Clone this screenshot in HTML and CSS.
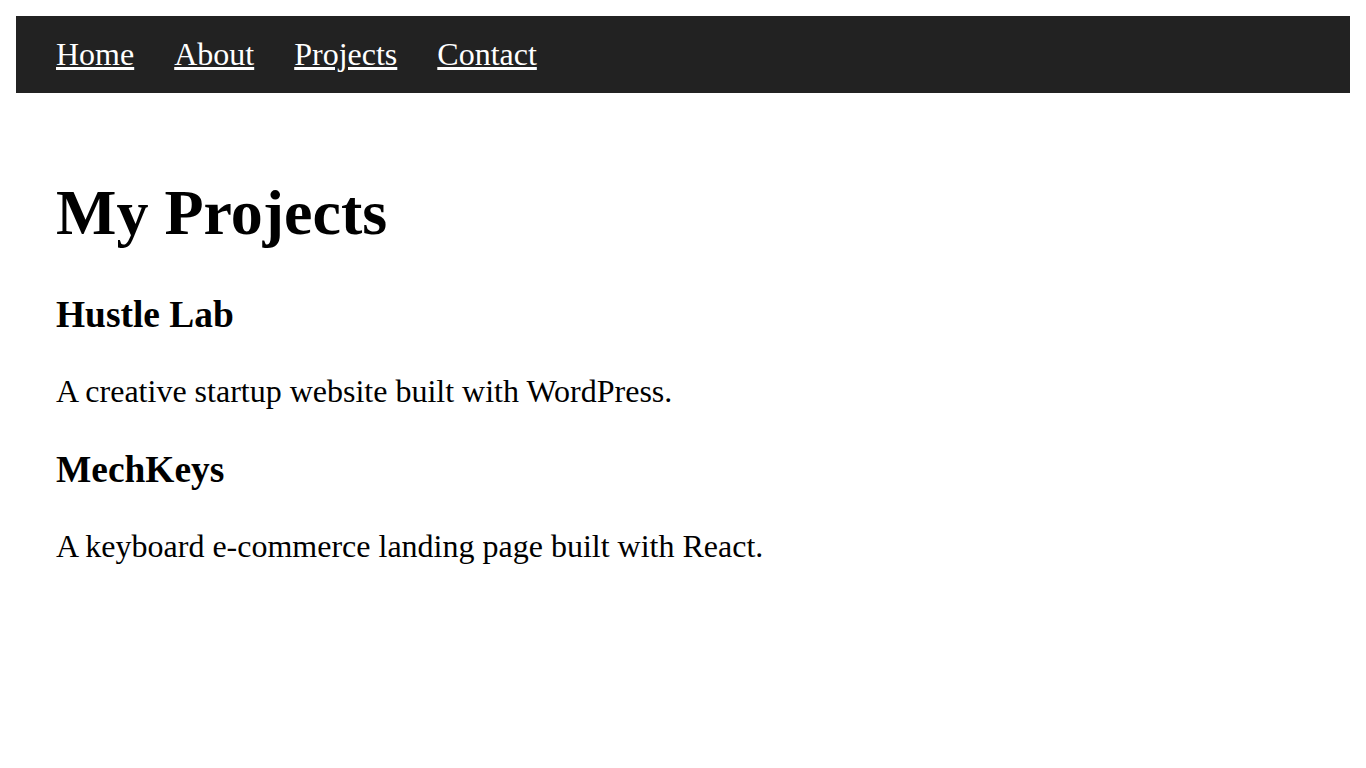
FILE: index.html
```html
<!DOCTYPE html>
<html lang="en">
<head>
<meta charset="utf-8">
<title>My Projects</title>
<link rel="stylesheet" href="styles.css">
</head>
<body>
<nav class="topnav">
  <a class="topnav-link" href="#">Home</a>
  <a class="topnav-link" href="#">About</a>
  <a class="topnav-link" href="#">Projects</a>
  <a class="topnav-link" href="#">Contact</a>
</nav>
<main class="content">
  <h1 class="page-title">My Projects</h1>
  <section class="project">
    <h3 class="project-title">Hustle Lab</h3>
    <p class="project-desc">A creative startup website built with WordPress.</p>
  </section>
  <section class="project">
    <h3 class="project-title">MechKeys</h3>
    <p class="project-desc">A keyboard e-commerce landing page built with React.</p>
  </section>
</main>
</body>
</html>
```
FILE: styles.css
```css
html, body {
  background: #ffffff;
}
body {
  margin: 16px;
  font-family: "Liberation Serif", "Times New Roman", serif;
  font-size: 32px;
  color: #000000;
}
.topnav {
  display: flex;
  gap: 40px;
  background: #222222;
  padding: 20px 40px;
}
.topnav-link {
  color: #ffffff;
  text-decoration: underline;
}
.content {
  padding: 40px;
}
.page-title {
  font-size: 64px;
  font-weight: bold;
  margin: 42.88px 0;
}
.project-title {
  font-size: 37.44px;
  font-weight: bold;
  margin: 37.44px 0;
}
.project-desc {
  font-size: 32px;
  margin: 32px 0;
}
```
